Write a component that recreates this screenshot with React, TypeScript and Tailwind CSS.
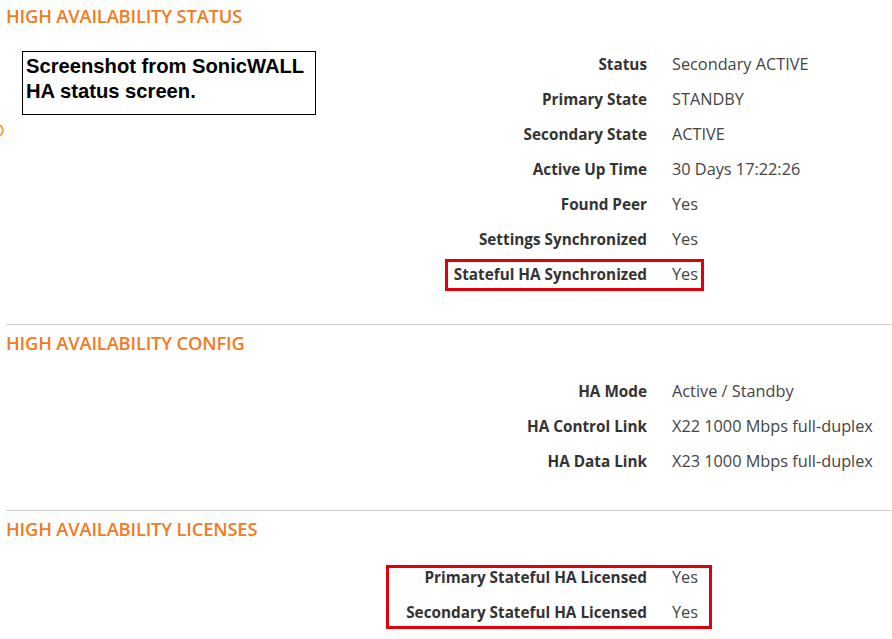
import React from 'react'

type Row = [string, string]

const statusRows: Row[] = [
  ['Status', 'Secondary ACTIVE'],
  ['Primary State', 'STANDBY'],
  ['Secondary State', 'ACTIVE'],
  ['Active Up Time', '30 Days 17:22:26'],
  ['Found Peer', 'Yes'],
  ['Settings Synchronized', 'Yes'],
  ['Stateful HA Synchronized', 'Yes'],
]

const configRows: Row[] = [
  ['HA Mode', 'Active / Standby'],
  ['HA Control Link', 'X22 1000 Mbps full-duplex'],
  ['HA Data Link', 'X23 1000 Mbps full-duplex'],
]

const licenseRows: Row[] = [
  ['Primary Stateful HA Licensed', 'Yes'],
  ['Secondary Stateful HA Licensed', 'Yes'],
]

function Header({ title }: { title: string }) {
  return (
    <div className="h-[32px] flex items-center pl-[6px] text-[18.3px] font-semibold text-[#f47a22] tracking-[-0.15px]">
      {title}
    </div>
  )
}

function Rows({ rows }: { rows: Row[] }) {
  return (
    <div className="flex flex-col">
      {rows.map(([label, value]) => (
        <div key={label} className="h-[35px] flex items-center pt-[1px]">
          <div className="w-[647px] text-right font-bold text-[15.3px] text-[#333]">{label}</div>
          <div className="pl-[25px] text-[16.3px] text-[#444]">{value}</div>
        </div>
      ))}
    </div>
  )
}

export default function App() {
  return (
    <div
      className="relative w-[892px] h-[639px] bg-white overflow-hidden"
      style={{ fontFamily: '"Open Sans", "Noto Sans", sans-serif' }}
    >
      <section className="relative">
        <Header title="HIGH AVAILABILITY STATUS" />
        <div className="mt-[14px]">
          <Rows rows={statusRows} />
        </div>
        {/* note box laid over the screenshot */}
        <div
          className="absolute left-[22px] top-[51px] w-[294px] h-[64px] border border-black pl-[3px] pt-[2px] text-[20.2px] font-bold leading-[25px] text-black"
          style={{ fontFamily: '"Liberation Sans", Arial, sans-serif' }}
        >
          Screenshot from SonicWALL
          <br />
          HA status screen.
        </div>
        <div className="absolute left-[-9px] top-[124px] w-[13px] h-[13px] rounded-full border-[2px] border-[#f5a04a]" />
        <div className="absolute left-[445px] top-[259px] w-[259px] h-[32px] border-[3px] border-[#e0000c]" />
      </section>

      <div className="mt-[33px] ml-[6px] border-t border-[#cfcfcf]" />

      <section className="mt-[2px]">
        <Header title="HIGH AVAILABILITY CONFIG" />
        <div className="mt-[14px]">
          <Rows rows={configRows} />
        </div>
      </section>

      <div className="mt-[32px] ml-[6px] border-t border-[#cfcfcf]" />

      <section className="relative mt-[2px]">
        <Header title="HIGH AVAILABILITY LICENSES" />
        <div className="mt-[14px]">
          <Rows rows={licenseRows} />
        </div>
        <div className="absolute left-[386px] top-[52px] w-[326px] h-[64px] border-[3px] border-[#e0000c]" />
      </section>
    </div>
  )
}
